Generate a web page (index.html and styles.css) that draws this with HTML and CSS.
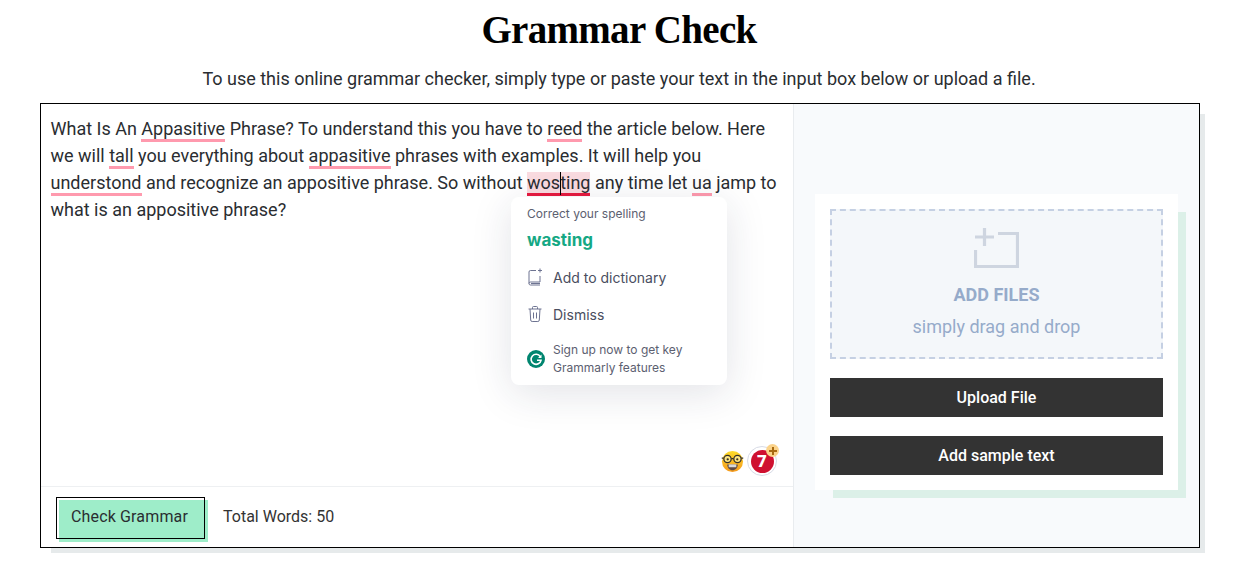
FILE: index.html
```html
<!DOCTYPE html>
<html lang="en">
<head>
<meta charset="utf-8">
<title>Grammar Check</title>
<link rel="stylesheet" href="styles.css">
</head>
<body>
<h1 class="title">Grammar Check</h1>
<p class="intro">To use this online grammar checker, simply type or paste your text in the input box below or upload a file.</p>
<main class="checker">
  <section class="editor">
    <div class="text-area">
      <p class="text">What Is An <span class="err">Appasitive</span> Phrase? To understand this you have to <span class="err">reed</span> the article below. Here<br>we will <span class="err">tall</span> you everything about <span class="err">appasitive</span> phrases with examples. It will help you<br><span class="err">understond</span> and recognize an appositive phrase. So without <span class="err-active">wos<i class="caret"></i>ting</span> any time let <span class="err">ua</span> jamp to<br>what is an appositive phrase?</p>
      <div class="popup">
        <div class="popup-head">Correct your spelling</div>
        <div class="popup-fix">wasting</div>
        <div class="popup-row row-add">
          <svg class="popup-icon" viewBox="0 0 16 18" width="16" height="18" fill="none" stroke="#6d7391" stroke-width="1"><path d="M9 2.500H3.500a1.500 1.500 0 0 0-1.500 1.500v11.500M13 8v6H3.500a1.500 1.500 0 0 0 0 3H13M4 15.500h9"/><path d="M13 .5v4M11 2.500h4"/></svg>
          <span>Add to dictionary</span>
        </div>
        <div class="popup-row row-dismiss">
          <svg class="popup-icon" viewBox="0 0 16 18" width="16" height="18" fill="none" stroke="#6d7391" stroke-width="1"><path d="M1.500 4h13M5.500 4V2.500a1 1 0 0 1 1-1h3a1 1 0 0 1 1 1V4M3 4l.7 11a1.500 1.500 0 0 0 1.500 1.500h5.600a1.500 1.500 0 0 0 1.500-1.500L13 4M6.500 7.500v6M9.500 7.500v6"/></svg>
          <span>Dismiss</span>
        </div>
        <div class="popup-row row-sign">
          <svg class="popup-icon" viewBox="0 0 18 18" width="18" height="18"><circle cx="9" cy="9" r="9" fill="#00856f"/><path d="M13.300 6.600A5 5 0 1 0 14 10.300H10" fill="none" stroke="#fff" stroke-width="1.600"/><path d="M14.500 4.500v3.500h-3.500z" fill="#fff"/></svg>
          <span>Sign up now to get key<br>Grammarly features</span>
        </div>
      </div>
      <div class="badges">
        <svg class="nerd" viewBox="0 0 24 24" width="23" height="23">
          <defs><linearGradient id="face" x1="0" y1="0" x2="0" y2="1"><stop offset="0" stop-color="#fedc2a"/><stop offset="1" stop-color="#f59a1c"/></linearGradient></defs>
          <circle cx="12" cy="12" r="11" fill="url(#face)"/>
          <circle cx="6.800" cy="9.500" r="3.800" fill="#ffe680" stroke="#33302a" stroke-width="1.300"/>
          <circle cx="17.200" cy="9.500" r="3.800" fill="#ffe680" stroke="#33302a" stroke-width="1.300"/>
          <path d="M.8 8.500h2M21.200 8.500h2M10.800 9h2.400" stroke="#33302a" stroke-width="1.200"/>
          <circle cx="7" cy="9.700" r="1.200" fill="#33302a"/><circle cx="17" cy="9.700" r="1.200" fill="#33302a"/>
          <path d="M6.500 15h11c0 3.500-2.500 6-5.500 6s-5.500-2.500-5.500-6z" fill="#5d4a45"/>
          <rect x="8" y="15" width="8" height="3" fill="#d9d9d9"/>
        </svg>
        <div class="score">
          <span class="score-num">7</span>
          <span class="score-plus">
            <svg viewBox="0 0 12 12" width="12" height="12"><path d="M6 2v8M2 6h8" stroke="#a86a10" stroke-width="2"/></svg>
          </span>
        </div>
      </div>
    </div>
    <div class="toolbar">
      <button class="check-btn" type="button">Check Grammar</button>
      <span class="word-count">Total Words: 50</span>
    </div>
  </section>
  <aside class="side">
    <div class="card">
      <div class="drop">
        <svg class="drop-icon" viewBox="0 0 45 40" width="45" height="40" fill="none" stroke="#ced5e0" stroke-width="3.200"><path d="M24 5.500H43.500V38.500H1.500V22"/><path d="M10.500 0v18M1 9h19"/></svg>
        <div class="drop-title">ADD FILES</div>
        <div class="drop-sub">simply drag and drop</div>
      </div>
      <button class="dark-btn" type="button">Upload File</button>
      <button class="dark-btn" type="button">Add sample text</button>
    </div>
  </aside>
</main>
</body>
</html>
```
FILE: styles.css
```css
*, *::after { box-sizing: border-box; }
html, body { margin: 0; padding: 0; }
body {
  background: #fff;
  color: #2a2d31;
  font-family: Roboto, "Liberation Sans", sans-serif;
  height: 569px;
  overflow: hidden;
}
.title {
  margin: 0;
  padding-top: 7px;
  height: 67px;
  text-align: center;
  font-family: "Liberation Serif", serif;
  font-weight: 700;
  font-size: 39px;
  letter-spacing: -.7px;
  line-height: 46px;
  color: #000;
}
.intro {
  margin: 0;
  height: 36px;
  text-align: center;
  font-size: 18px;
  line-height: 24px;
}
.checker {
  margin-left: 40px;
  width: 1160px;
  height: 445px;
  border: 1px solid #000;
  display: flex;
  background: #fff;
  box-shadow: 8px 8px 0 -3px #e6eaeb;
}
.editor {
  width: 753px;
  display: flex;
  flex-direction: column;
  border-right: 1px solid #e9ecef;
}
.text-area {
  position: relative;
  height: 383px;
  padding: 11px 9.500px;
  border-bottom: 1px solid #eef0f2;
}
.text {
  margin: 0;
  font-size: 18px;
  line-height: 27px;
  white-space: nowrap;
}
.err { border-bottom: 3px solid #ff9aae; }
.err-active {
  position: relative;
  background: #fadbe0;
  border-bottom: 3px solid #e8193f;
}
.caret {
  position: absolute;
  top: 0;
  left: 33px;
  width: 1px;
  height: 23px;
  background: #000;
}
.popup {
  position: absolute;
  left: 470px;
  top: 93px;
  width: 216px;
  height: 188px;
  padding: 9px 16px;
  background: #fff;
  border-radius: 8px;
  box-shadow: 0 8px 40px rgba(30, 40, 70, .13);
  font-family: Inter, sans-serif;
  color: #4a4e60;
}
.popup-head { font-size: 12px; line-height: 15px; color: #5c6070; }
.popup-fix {
  margin-top: 9px;
  font-size: 17px;
  line-height: 20px;
  font-weight: 700;
  color: #15a884;
}
.popup-row {
  display: flex;
  align-items: center;
  gap: 10px;
  font-size: 14px;
}
.popup-icon { flex: none; }
.row-add { margin-top: 17px; height: 20px; }
.row-dismiss { margin-top: 17px; height: 20px; }
.row-sign {
  margin-top: 17px;
  font-size: 12px;
  line-height: 18px;
  color: #5c6070;
  gap: 8px;
}
.badges {
  position: absolute;
  right: 16px;
  top: 342px;
  display: flex;
  align-items: center;
  gap: 3px;
}
.nerd { display: block; }
.score {
  position: relative;
  width: 30px;
  height: 30px;
  border-radius: 50%;
  border: 1.500px solid #d8dbe6;
  background: #fff;
  display: flex;
  align-items: center;
  justify-content: center;
}
.score-num {
  width: 23px;
  height: 23px;
  border-radius: 50%;
  background: #cf1130;
  color: #fff;
  font-size: 17px;
  font-weight: 900;
  line-height: 23px;
  text-align: center;
}
.score-plus {
  position: absolute;
  top: -3px;
  right: -3px;
  width: 13px;
  height: 13px;
  border-radius: 50%;
  background: #fbd38a;
  display: flex;
  align-items: center;
  justify-content: center;
}
.toolbar {
  flex: 1;
  display: flex;
  align-items: flex-start;
  padding: 13px 0 0 18px;
}
.check-btn {
  position: relative;
  width: 149px;
  height: 42px;
  border: 0;
  padding: 0 8px 10px 0;
  background: #9eedc9;
  color: #2a2d31;
  font: 400 16px Roboto, sans-serif;
  letter-spacing: .15px;
}
.check-btn::after {
  content: "";
  position: absolute;
  left: -3px;
  top: -3px;
  width: 149px;
  height: 42px;
  border: 1px solid #000;
}
.word-count {
  margin: 7px 0 0 15px;
  font-size: 16px;
  line-height: 19px;
  color: #333;
}
.side {
  flex: 1;
  background: #f8fafc;
  padding: 90px 21px 0 21px;
}
.card {
  width: 363px;
  height: 296px;
  padding: 15px;
  background: #fff;
  box-shadow: 13px 13px 0 -5px #dcf0e8;
  display: flex;
  flex-direction: column;
  gap: 19px;
}
.drop {
  flex: none;
  height: 150px;
  border: 2px dashed #c5d0e3;
  background: #f4f7fa;
  display: flex;
  flex-direction: column;
  align-items: center;
  padding-top: 17px;
}
.drop-icon { display: block; }
.drop-title {
  margin-top: 15px;
  font-size: 18px;
  line-height: 24px;
  font-weight: 700;
  color: #96abca;
}
.drop-sub {
  margin-top: 8px;
  font-size: 18px;
  line-height: 24px;
  color: #96abca;
}
.dark-btn {
  flex: none;
  height: 39px;
  border: 0;
  padding: 0;
  background: #333;
  color: #fff;
  font: 500 16px Roboto, sans-serif;
}
```
